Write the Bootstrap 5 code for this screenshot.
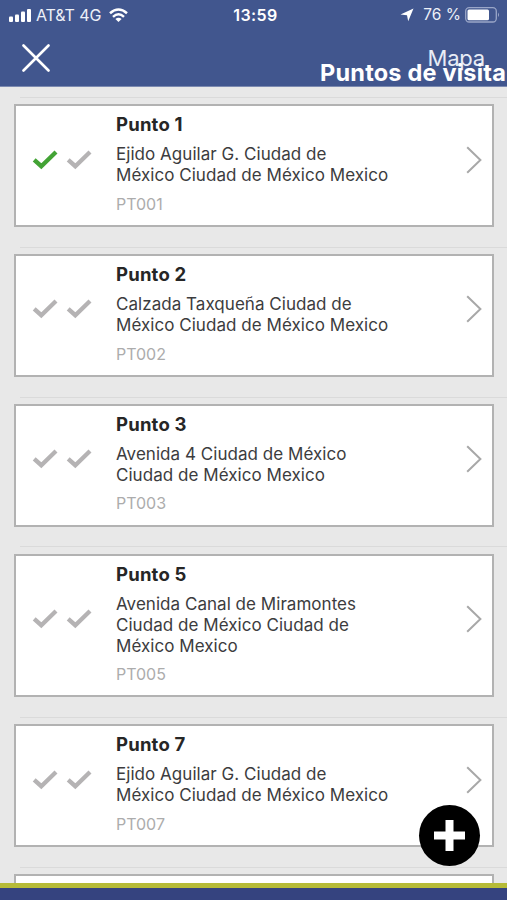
<!DOCTYPE html>
<html lang="es">
<head>
<meta charset="utf-8">
<meta name="viewport" content="width=device-width, initial-scale=1">
<title>Puntos de visita</title>
<link rel="stylesheet" href="https://cdn.jsdelivr.net/npm/bootstrap@5.3.0/dist/css/bootstrap.min.css">
<style>
body{font-family:Inter,"Liberation Sans",sans-serif;background:#e8e8e8;color:#3c3c3e}
.app{height:900px}
.top{height:87px;background:#41568e;border-bottom:1px solid #7c8ab0;color:#fff}
.status{height:30px;font-size:15px;line-height:30px;padding-left:9px;padding-right:7px}
.clock{left:0;right:0;top:0;font-size:16px;line-height:31px;font-weight:600;letter-spacing:.4px;padding-left:4px}
.carrier{margin-left:4px;margin-right:8px;font-size:16px;letter-spacing:-.1px;color:#edf0f8}
.battery-label{font-size:15.5px;color:#edf0f8;margin-left:9px;margin-right:4px}
.closebtn{left:22px;top:44px;line-height:0}
.map-link{right:22px;top:43px;font-size:22px;line-height:30px;letter-spacing:-.2px;color:#e8ecf6}
.title{right:1px;top:58px;font-size:23.5px;line-height:30px;font-weight:650;letter-spacing:.2px}
.points{padding-top:10px}
.rule{height:1px;background:#dadada;margin-left:20px}
.point{background:#fff;border:2px solid #b2b2b2;margin:6.25px 13.5px 19.75px 14px;min-height:122.75px;padding-left:16px;padding-right:10px}
.marks{padding-bottom:12px}
.checks{width:84px;gap:7px}
.body-text{padding-top:6px;padding-bottom:10.25px;width:290px}
.name{font-size:18.5px;line-height:24px;font-weight:650;letter-spacing:.2px;color:#262626;margin-bottom:8px}
.addr{font-size:17px;line-height:21px;letter-spacing:.04px}
.code{font-size:16px;line-height:22px;color:#acacac;margin-top:6.5px}
.foot{height:17px;background:#35437f;border-top:5px solid #b6bb37}
.fab{left:419px;top:805px;width:61px;height:61px;background:#000}
</style>
<script src="https://cdn.jsdelivr.net/npm/bootstrap@5.3.0/dist/js/bootstrap.bundle.min.js"></script>
</head>
<body>
<svg class="d-none" xmlns="http://www.w3.org/2000/svg">
<symbol id="check" viewBox="0 0 27 22"><path d="M2.2 10.8 L9.3 17.2 L24 3" fill="none" stroke="currentColor" stroke-width="4.3"/></symbol>
<symbol id="chev" viewBox="0 0 16 28"><path d="M1.2 1.2 L14.4 14 L1.2 26.8" fill="none" stroke="#a8a8a8" stroke-width="2"/></symbol>
</svg>
<div class="app position-relative overflow-hidden d-flex flex-column">
<header class="top position-relative flex-shrink-0">
<div class="status d-flex align-items-center">
<svg width="23" height="15" viewBox="0 0 23 15" fill="#fff"><rect x="0" y="8.5" width="4" height="5.5" rx="1"/><rect x="6" y="6.5" width="4" height="7.5" rx="1"/><rect x="12" y="3.5" width="4" height="10.5" rx="1"/><rect x="18" y="1" width="4" height="13" rx="1"/></svg>
<span class="carrier">AT&amp;T 4G</span>
<svg width="19" height="15" viewBox="0 0 19 15" fill="none" stroke="#fff" stroke-width="2.5"><path d="M1 5.2 Q9.5 -2.2 18 5.2"/><path d="M4 8.8 Q9.5 3.8 15 8.8"/><path d="M9.5 14 L6.4 10.9 Q9.5 8.4 12.6 10.9 Z" fill="#fff" stroke="none"/></svg>
<svg class="ms-auto" width="14" height="14" viewBox="0 0 14 14"><path d="M13.5 .5 L8.2 13.3 L7 7.2 L.5 6.4 Z" fill="#fff"/></svg>
<span class="battery-label">76 %</span>
<svg width="35" height="16" viewBox="0 0 35 16"><rect x=".7" y=".7" width="30.6" height="14.3" rx="3.5" fill="none" stroke="#9aa6c8" stroke-width="1.3"/><rect x="2.5" y="2.5" width="21.5" height="10.7" rx="1.5" fill="#fff"/><path d="M33 5.5 q2 2.3 0 4.6z" fill="#9aa6c8"/></svg>
</div>
<div class="clock position-absolute text-center">13:59</div>
<div class="closebtn position-absolute"><svg width="28" height="28" viewBox="0 0 28 28"><path d="M1.5 1.5 L26.5 26.5 M26.5 1.5 L1.5 26.5" stroke="#fff" stroke-width="2.6" stroke-linecap="round"/></svg></div>
<div class="map-link position-absolute">Mapa</div>
<div class="title position-absolute text-nowrap">Puntos de visita</div>
</header>
<main class="points flex-grow-1 overflow-hidden" id="points"></main>
<div class="fab position-absolute rounded-circle d-flex align-items-center justify-content-center"><svg width="31" height="31" viewBox="0 0 31 31"><path d="M11.5 0h8v11.5H31v8H19.5V31h-8V19.5H0v-8h11.5z" fill="#fff"/></svg></div>
<footer class="foot flex-shrink-0"></footer>
</div>
<script>
const points=[
["Punto 1","Ejido Aguilar G. Ciudad de<br>México Ciudad de México Mexico","PT001",1],
["Punto 2","Calzada Taxqueña Ciudad de<br>México Ciudad de México Mexico","PT002"],
["Punto 3","Avenida 4 Ciudad de México<br>Ciudad de México Mexico","PT003"],
["Punto 5","Avenida Canal de Miramontes<br>Ciudad de México Ciudad de<br>México Mexico","PT005"],
["Punto 7","Ejido Aguilar G. Ciudad de<br>México Ciudad de México Mexico","PT007"],
["","",""]];
const check=c=>`<svg width="27" height="22" color="${c}"><use href="#check"/></svg>`;
document.getElementById("points").innerHTML=points.map(([n,a,c,done])=>`<div class="rule"></div><div class="point d-flex align-items-center">${n?`<div class="checks marks d-flex flex-shrink-0">${check(done?"#43a335":"#b5b3b4")}${check("#b5b3b4")}</div><div class="body-text align-self-start text-nowrap"><div class="name">${n}</div><div class="addr">${a}</div><div class="code">${c}</div></div><div class="marks ms-auto lh-1"><svg class="d-block" width="16" height="28"><use href="#chev"/></svg></div>`:""}</div>`).join("");
</script>
</body>
</html>
